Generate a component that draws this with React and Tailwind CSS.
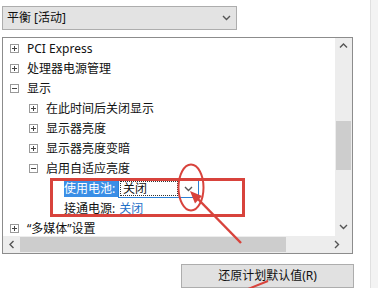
import React from 'react';

const FONT = "font-['Noto_Sans','Noto_Sans_CJK_SC',sans-serif]";

function Chevron({ dir = 'down', className = '' }) {
  const pts = {
    down: '1,1 4.5,4.5 8,1',
    up: '1,4.5 4.5,1 8,4.5',
    left: '4.5,1 1,4.5 4.5,8',
    right: '1,1 4.5,4.5 1,8',
  }[dir];
  const vb = dir === 'left' || dir === 'right' ? '0 0 6 9' : '0 0 9 6';
  const size = dir === 'left' || dir === 'right' ? 'w-[6px] h-[9px]' : 'w-[9px] h-[6px]';
  return (
    <svg viewBox={vb} className={`${size} shrink-0 ${className}`}>
      <polyline points={pts} fill="none" stroke="#555" strokeWidth="1.4" />
    </svg>
  );
}

function Toggle({ open }) {
  return (
    <span className="relative w-[9px] h-[9px] border border-[#999] bg-white shrink-0">
      <span className="absolute left-[1px] top-[3px] w-[5px] h-[1px] bg-[#444]" />
      {!open && <span className="absolute left-[3px] top-[1px] w-[1px] h-[5px] bg-[#444]" />}
    </span>
  );
}

function Row({ level, open, leaf, children }) {
  const pad = level === 0 ? 'pl-[7px]' : level === 1 ? 'pl-[26px]' : 'pl-[61px]';
  return (
    <div className={`h-[20px] flex items-center whitespace-nowrap ${pad}`}>
      {!leaf && <Toggle open={open} />}
      {!leaf && <span className="w-[8px] shrink-0" />}
      {children}
    </div>
  );
}

export default function App() {
  return (
    <div className={`relative w-[379px] h-[288px] overflow-hidden bg-white flex text-[12px] text-[#111] ${FONT}`}>
      <div className="w-[370px] pl-[2px] flex flex-col">
        <div className="mt-[6px] w-[235px] h-[25px] border border-[#adadad] bg-[#e3e3e3] flex items-center pl-[4px] pr-[4px]">
          <span className="flex-1">平衡 [活动]</span>
          <Chevron dir="down" className="mr-[1px]" />
        </div>

        <div className="mt-[7px] w-[351px] h-[217px] border border-[#8c8c8c] flex flex-col">
          <div className="h-[198px] flex">
            <div className="flex-1 overflow-hidden pt-[1px]">
              <Row level={0}>PCI Express</Row>
              <Row level={0}>处理器电源管理</Row>
              <Row level={0} open>显示</Row>
              <Row level={1}>在此时间后关闭显示</Row>
              <Row level={1}>显示器亮度</Row>
              <Row level={1}>显示器亮度变暗</Row>
              <Row level={1} open>启用自适应亮度</Row>
              <Row level={2} leaf>
                <span className="w-[54px] shrink-0 overflow-hidden bg-[#3a8ee6] text-white h-[17px] leading-[17px]">使用电池:</span>
                <span className="w-[81px] shrink-0 h-[19px] border border-[#2a7fd4] bg-white flex items-center pl-[1px]">
                  <span className="w-[58px] shrink-0 h-[15px] border border-dotted border-[#333] leading-[13px] pl-[2px]">关闭</span>
                  <span className="flex-1 flex justify-center">
                    <Chevron dir="down" />
                  </span>
                </span>
              </Row>
              <Row level={2} leaf>
                <span>接通电源:</span>
                <span className="ml-[4px] text-[#1f6fc7]">关闭</span>
              </Row>
              <Row level={0}>“多媒体”设置</Row>
            </div>
            <div className="w-[17px] bg-[#ededed] flex flex-col items-center">
              <div className="h-[17px] flex items-center">
                <Chevron dir="up" />
              </div>
              <div className="h-[66px]" />
              <div className="w-[15px] h-[49px] bg-[#cdcdcd]" />
              <div className="flex-1" />
              <div className="h-[17px] flex items-center">
                <Chevron dir="down" />
              </div>
            </div>
          </div>
          <div className="h-[17px] bg-[#ededed] flex items-center">
            <div className="w-[17px] flex justify-center">
              <Chevron dir="left" />
            </div>
            <div className="w-[266px] h-[15px] bg-[#cdcdcd]" />
            <div className="flex-1 flex pr-[12px]">
              <span className="ml-auto">
                <Chevron dir="right" />
              </span>
            </div>
          </div>
        </div>

        <div className="mt-[10px] ml-[179px] w-[173px] h-[26px] border border-[#adadad] bg-[#e1e1e1] flex items-center justify-center">
          还原计划默认值(R)
        </div>
      </div>

      <div className="w-[8px] border-l border-[#e0e0e0] bg-[#f3f3f3]" />

      <svg className="absolute inset-0 pointer-events-none" width="379" height="288" viewBox="0 0 379 288">
        <rect x="51.5" y="179.5" width="192" height="36" fill="none" stroke="#d8433c" strokeWidth="3" />
        <ellipse cx="191" cy="187.5" rx="12.5" ry="23" fill="none" stroke="#d8433c" strokeWidth="2" />
        <line x1="241" y1="243" x2="196" y2="197" stroke="#d8433c" strokeWidth="2.5" />
        <polygon points="190,191 202,196 195,203.5" fill="#d8433c" />
        <line x1="248" y1="289" x2="268" y2="281" stroke="#d8433c" strokeWidth="2" />
      </svg>
    </div>
  );
}
